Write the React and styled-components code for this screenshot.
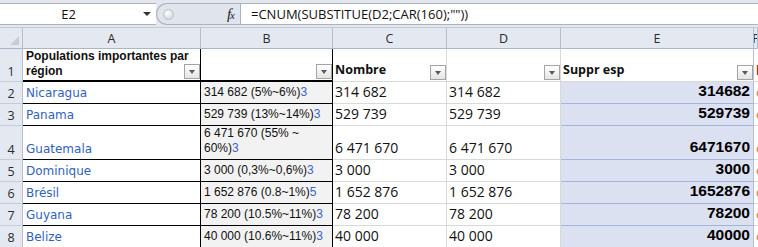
import React from 'react';
import styled, { createGlobalStyle } from 'styled-components';

const GlobalStyle = createGlobalStyle`
  html, body {
    margin: 0;
    padding: 0;
    background: #fff;
  }
  body {
    width: 758px;
    height: 247px;
    overflow: hidden;
  }
`;

const Window = styled.div`
  width: 758px;
  height: 247px;
  overflow: hidden;
  background: #fff;
  display: flex;
  flex-direction: column;
`;

/* ---------- formula bar ---------- */

const Top = styled.div`
  height: 28px;
  flex: none;
  box-sizing: border-box;
  padding-top: 3px;
  background: #e4e8ee;
  border-bottom: 1px solid #c3cad3;
`;

const Bar = styled.div`
  display: flex;
  height: 22px;
`;

const NameBox = styled.div`
  width: 156px;
  box-sizing: border-box;
  display: flex;
  align-items: center;
  background: #fff;
  border-top: 1px solid #a9b2bd;
  border-bottom: 1px solid #a9b2bd;
`;

const NameText = styled.span`
  flex: 1;
  padding-right: 6px;
  text-align: center;
  font: 13px 'Open Sans', sans-serif;
  color: #111;
`;

const NameArrow = styled.span`
  width: 0;
  height: 0;
  margin-right: 5px;
  border-left: 4px solid transparent;
  border-right: 4px solid transparent;
  border-top: 4px solid #333;
`;

const Pill = styled.div`
  width: 84px;
  box-sizing: border-box;
  display: flex;
  align-items: center;
  justify-content: space-between;
  padding: 0 6px 0 6px;
  background: #dfe4ed;
  border: 1px solid #a9b2bd;
  border-right: none;
  border-radius: 11px 0 0 11px;
`;

const Knob = styled.span`
  width: 9px;
  height: 9px;
  border-radius: 50%;
  border: 1px solid #bcc2ca;
  background: radial-gradient(circle at 40% 35%, #ffffff, #c7ccd3);
`;

const Fx = styled.span`
  font: italic 15px 'Liberation Serif', serif;
  color: #222;
  letter-spacing: -1px;

  small {
    font-size: 11px;
  }
`;

const Input = styled.div`
  flex: 1;
  display: flex;
  align-items: center;
  box-sizing: border-box;
  padding-left: 10px;
  background: #fff;
  border: 1px solid #a9b2bd;
  border-right: none;
  font: 13px 'Open Sans', sans-serif;
  color: #111;
  white-space: nowrap;
`;

/* ---------- sheet ---------- */

const Sheet = styled.div`
  display: grid;
  grid-template-columns: 23px 178px 132px 114px 114px 193px 1fr;
  grid-template-rows: 21px 33px 22px 22px 34px 22px 22px 22px 22px;
`;

const ColHead = styled.div`
  box-sizing: border-box;
  background: #e4e9f1;
  border-right: 1px solid #b6c0cd;
  border-bottom: 1px solid #a9b6c8;
  display: flex;
  align-items: center;
  justify-content: center;
  font: 12.5px 'Open Sans', sans-serif;
  color: #2b2b2b;
  overflow: hidden;
`;

const Corner = styled(ColHead)`
  position: relative;

  &::after {
    content: '';
    position: absolute;
    right: 3px;
    bottom: 3px;
    border-left: 9px solid transparent;
    border-bottom: 9px solid #c6cdd7;
  }
`;

const RowHead = styled.div`
  box-sizing: border-box;
  background: #e4e9f1;
  border-right: 1px solid #b6c0cd;
  border-bottom: 1px solid #c4ccd8;
  display: flex;
  align-items: flex-end;
  justify-content: center;
  padding-bottom: 1px;
  font: 12.5px 'Open Sans', sans-serif;
  color: #2b2b2b;
`;

const Cell = styled.div`
  position: relative;
  box-sizing: border-box;
  display: flex;
  align-items: flex-end;
  justify-content: ${(p) => (p.$right ? 'flex-end' : 'flex-start')};
  padding: 0 2px 2px 2px;
  background: #fff;
  border-right: 1px solid ${(p) => (p.$edge ? '#b6c0cd' : '#d9d9d9')};
  border-bottom: 1px solid #d9d9d9;
  color: #111;
  overflow: hidden;
  white-space: nowrap;
`;

const TableCell = styled(Cell)`
  background: ${(p) => (p.$shade ? '#f2f2f2' : '#fff')};
  border-right: 1px solid #000;
  border-bottom: ${(p) => (p.$head ? '2px' : '1px')} solid #000;
  padding: 0 2px ${(p) => (p.$head ? '1px' : '3px')} 3px;
  white-space: normal;
`;

const SelCell = styled(Cell)`
  background: #dbe1f1;
  border-bottom: 1px solid #a4b4db;
  border-right: 1px solid #b6c0cd;
  padding: 0 3px 3px 2px;
`;

const FCell = styled(Cell)`
  padding-left: 2px;
  border-right: none;
`;

const HeadText = styled.span`
  font: bold 12px/15px 'Liberation Sans', Arial, sans-serif;
  color: #111;
`;

const HeadLabel = styled.span`
  font: bold 12.5px 'Open Sans', sans-serif;
  color: #111;
  padding-bottom: 1px;
`;

const FilterButton = styled.span`
  position: absolute;
  right: 0;
  bottom: 1px;
  width: 16px;
  height: 15px;
  box-sizing: border-box;
  border: 1px solid #a4a4a4;
  background: linear-gradient(#ffffff, #e4e4e4);

  &::after {
    content: '';
    position: absolute;
    left: 4px;
    top: 5px;
    border-left: 3.5px solid transparent;
    border-right: 3.5px solid transparent;
    border-top: 4px solid #5b5b5b;
  }
`;

const Region = styled.span`
  font: 12px 'DejaVu Sans', Verdana, sans-serif;
  color: #2f62c0;
`;

const Estimate = styled.span`
  font: 12px/15px 'Liberation Sans', Arial, sans-serif;
  color: #111;
`;

const Ref = styled.span`
  color: #3a64c8;
`;

const Num = styled.span`
  font: 14px 'Open Sans', sans-serif;
  color: #111;
`;

const BoldNum = styled.span`
  font: bold 15.5px 'Liberation Sans', Arial, sans-serif;
  color: #000;
`;

const Overflow = styled.span`
  font: ${(p) => (p.$bold ? 'bold ' : '')}13px 'Open Sans', sans-serif;
  color: ${(p) => p.$color};
`;

const rows = [
  { n: 2, name: 'Nicaragua', est: '314 682 (5%~6%)', ref: '3', value: '314 682' },
  { n: 3, name: 'Panama', est: '529 739 (13%~14%)', ref: '3', value: '529 739' },
  { n: 4, name: 'Guatemala', est: '6 471 670 (55% ~ 60%)', ref: '3', value: '6 471 670' },
  { n: 5, name: 'Dominique', est: '3 000 (0,3%~0,6%)', ref: '3', value: '3 000' },
  { n: 6, name: 'Brésil', est: '1 652 876 (0.8~1%)', ref: '5', value: '1 652 876' },
  { n: 7, name: 'Guyana', est: '78 200 (10.5%~11%)', ref: '3', value: '78 200' },
  { n: 8, name: 'Belize', est: '40 000 (10.6%~11%)', ref: '3', value: '40 000' },
];

const columns = ['A', 'B', 'C', 'D', 'E', 'F'];

const App = () => {
  return (
    <Window>
      <GlobalStyle />
      <Top>
        <Bar>
          <NameBox>
            <NameText>E2</NameText>
            <NameArrow />
          </NameBox>
          <Pill>
            <Knob />
            <Fx>
              f<small>x</small>
            </Fx>
          </Pill>
          <Input>=CNUM(SUBSTITUE(D2;CAR(160);""))</Input>
        </Bar>
      </Top>

      <Sheet>
        <Corner />
        {columns.map((c) => (
          <ColHead key={c}>{c}</ColHead>
        ))}

        <RowHead>1</RowHead>
        <TableCell $head>
          <HeadText>Populations importantes par région</HeadText>
          <FilterButton />
        </TableCell>
        <TableCell $head>
          <FilterButton />
        </TableCell>
        <Cell>
          <HeadLabel>Nombre</HeadLabel>
          <FilterButton />
        </Cell>
        <Cell>
          <FilterButton />
        </Cell>
        <Cell $edge>
          <HeadLabel>Suppr esp</HeadLabel>
          <FilterButton />
        </Cell>
        <FCell>
          <Overflow $bold $color="#8b1a1a">l</Overflow>
        </FCell>

        {rows.map((r) => (
          <React.Fragment key={r.n}>
            <RowHead>{r.n}</RowHead>
            <TableCell>
              <Region>{r.name}</Region>
            </TableCell>
            <TableCell $shade>
              <Estimate>
                {r.est}
                <Ref>{r.ref}</Ref>
              </Estimate>
            </TableCell>
            <Cell>
              <Num>{r.value}</Num>
            </Cell>
            <Cell>
              <Num>{r.value}</Num>
            </Cell>
            <SelCell $right>
              <BoldNum>{r.value.replace(/ /g, '')}</BoldNum>
            </SelCell>
            <FCell>
              <Overflow $color="#c8741e">o</Overflow>
            </FCell>
          </React.Fragment>
        ))}
      </Sheet>
    </Window>
  );
};

export default App;
